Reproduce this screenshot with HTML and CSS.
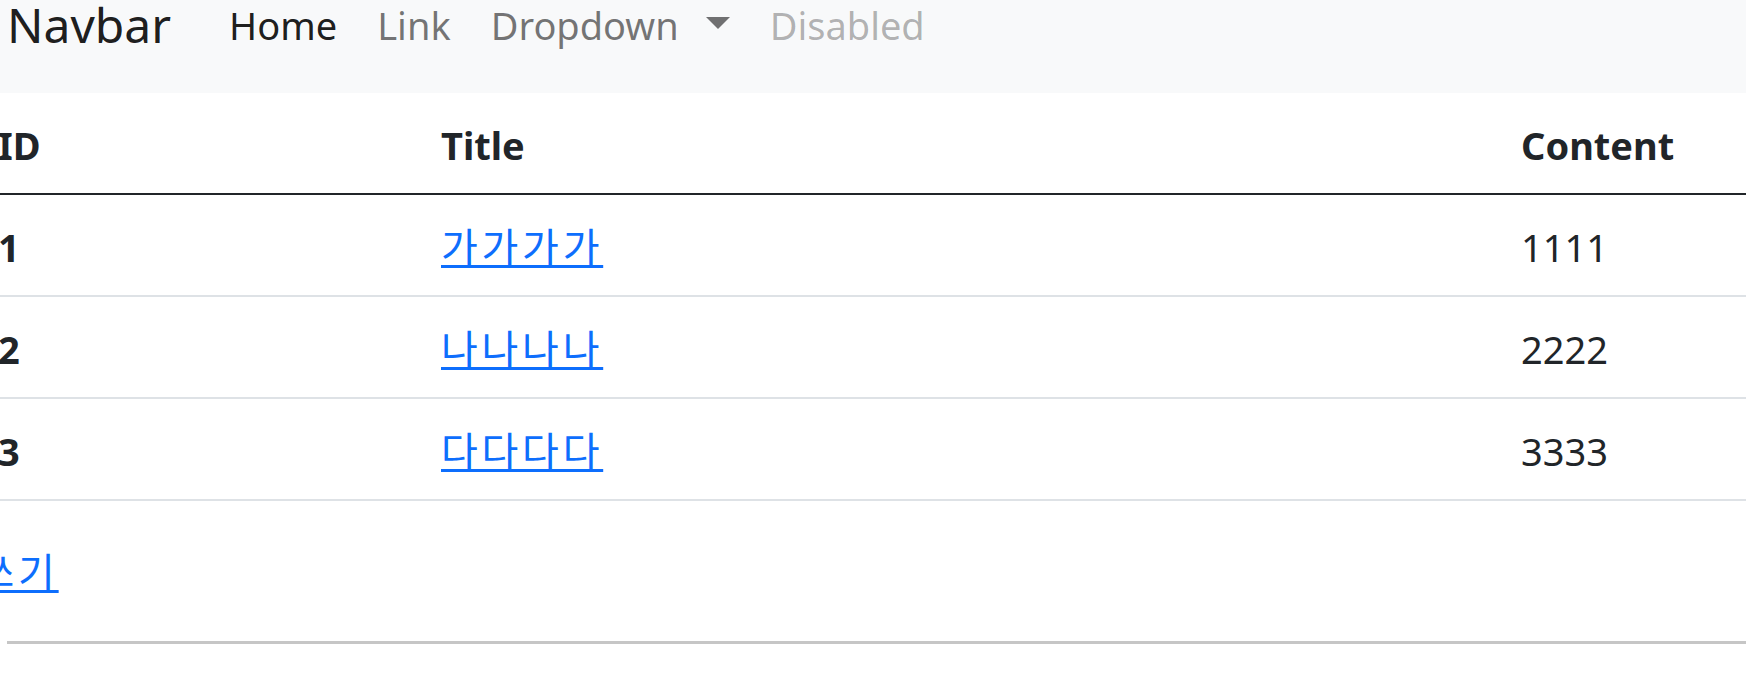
FILE: index.html
```html
<!DOCTYPE html>
<html lang="ko">
<head>
<meta charset="utf-8">
<title>Board</title>
<link rel="stylesheet" href="styles.css">
</head>
<body>
<nav class="navbar">
  <a class="brand" href="#">Navbar</a>
  <ul class="nav">
    <li><a class="nav-link active" href="#">Home</a></li>
    <li><a class="nav-link" href="#">Link</a></li>
    <li><a class="nav-link dropdown-toggle" href="#">Dropdown</a></li>
    <li><a class="nav-link disabled" href="#">Disabled</a></li>
  </ul>
</nav>
<main class="content">
  <table class="table">
    <colgroup>
      <col class="col-id">
      <col class="col-title">
      <col>
    </colgroup>
    <thead>
      <tr><th>ID</th><th>Title</th><th>Content</th></tr>
    </thead>
    <tbody>
      <tr><th>1</th><td><a class="kr" href="#">가가가가</a></td><td>1111</td></tr>
      <tr><th>2</th><td><a class="kr" href="#">나나나나</a></td><td>2222</td></tr>
      <tr><th>3</th><td><a class="kr" href="#">다다다다</a></td><td>3333</td></tr>
    </tbody>
  </table>
  <div class="actions"><a class="kr" href="#">글쓰기</a></div>
  <hr class="divider">
</main>
</body>
</html>
```
FILE: styles.css
```css
html, body {
  margin: 0;
  padding: 0;
  background: #fff;
  overflow: hidden;
}
body {
  font-family: "Noto Sans", "Noto Sans CJK KR", sans-serif;
  font-size: 38px;
  line-height: 60px;
  color: #212529;
}
a { color: #0d6efd; }

.navbar {
  display: flex;
  align-items: flex-start;
  height: 93px;
  background: #f8f9fa;
  padding-left: 7px;
  box-sizing: border-box;
}
.brand {
  font-size: 48px;
  line-height: 50px;
  color: rgba(0, 0, 0, .9);
  text-decoration: none;
  margin-right: 38px;
}
.nav {
  display: flex;
  list-style: none;
  margin: 0;
  padding: 0;
}
.nav-link {
  display: block;
  font-size: 38px;
  line-height: 50px;
  padding: 0 20px;
  color: rgba(0, 0, 0, .55);
  text-decoration: none;
}
.nav-link.active { color: rgba(0, 0, 0, .9); }
.nav-link.disabled { color: rgba(0, 0, 0, .3); }
.dropdown-toggle::after {
  content: "";
  display: inline-block;
  margin-left: 27px;
  vertical-align: 11px;
  border-top: 12px solid;
  border-left: 12px solid transparent;
  border-right: 12px solid transparent;
}

.table {
  table-layout: fixed;
  border-collapse: separate;
  border-spacing: 0;
  width: 1748px;
  margin-left: -2px;
}
.col-id { width: 443px; }
.col-title { width: 1080px; }
.table th, .table td {
  text-align: left;
  padding: 22px 0 18px;
  line-height: 60px;
  border-bottom: 2px solid #dee2e6;
  vertical-align: top;
}
.table th { font-weight: 700; }
.table thead th { border-bottom-color: #212529; }
.table td { font-weight: 400; }

.kr {
  font-size: 40px;
  line-height: 1;
  letter-spacing: 3.75px;
  text-decoration-thickness: 3px;
  text-underline-offset: 3px;
}

.actions {
  margin-top: 41px;
  margin-left: -63px;
  line-height: 60px;
}
.divider {
  border: 0;
  border-top: 3px solid #c6c6c6;
  height: 0;
  margin: 39px 0 0 7px;
}
```
